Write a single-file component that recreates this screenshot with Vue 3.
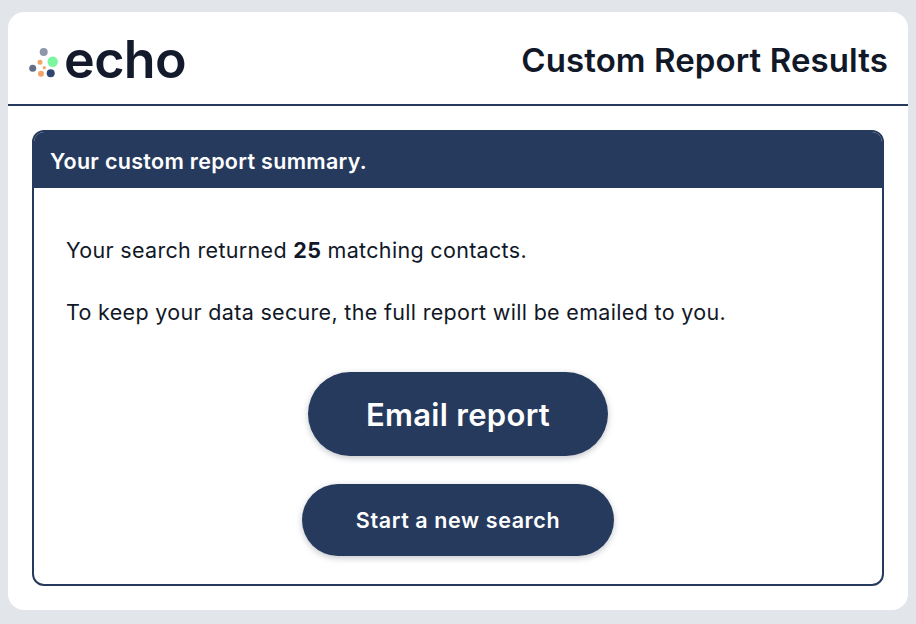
<template>
  <div class="page">
    <main class="card">
      <header class="top">
        <div class="logo">
          <svg class="mark" width="32" height="36" viewBox="0 0 32 36">
            <circle cx="14.7" cy="5" r="4" fill="#8e97a8" />
            <circle cx="11" cy="15.3" r="2.5" fill="#f2a468" />
            <circle cx="23.7" cy="14.7" r="5.2" fill="#7af79f" />
            <circle cx="15.3" cy="20.7" r="1.6" fill="#f2a468" />
            <circle cx="3.7" cy="21.3" r="3.5" fill="#666e87" />
            <circle cx="12" cy="26.7" r="3" fill="#f2a468" />
            <circle cx="21.7" cy="26.3" r="4" fill="#2f4673" />
          </svg>
          <span class="word">echo</span>
        </div>
        <h1>Custom Report Results</h1>
      </header>

      <section class="panel">
        <h2>Your custom report summary.</h2>
        <div class="body">
          <p>Your search returned <b>25</b> matching contacts.</p>
          <p>To keep your data secure, the full report will be emailed to you.</p>
          <div class="actions">
            <button class="btn big">Email report</button>
            <button class="btn small">Start a new search</button>
          </div>
        </div>
      </section>
    </main>
  </div>
</template>

<script setup>
</script>

<style>
  html, body {
    margin: 0;
    background: #e2e5ea;
  }
</style>

<style scoped>
  .page {
    box-sizing: border-box;
    width: 916px;
    height: 624px;
    padding: 12px 8px 14px;
    font-family: Inter, "Liberation Sans", sans-serif;
    color: #111827;
  }
  .card {
    height: 100%;
    background: #fff;
    border-radius: 16px;
    display: flex;
    flex-direction: column;
  }
  .top {
    height: 94px;
    box-sizing: border-box;
    border-bottom: 2px solid #263a5e;
    display: flex;
    justify-content: space-between;
    align-items: center;
    padding: 0 20px 0 21px;
  }
  .logo {
    display: flex;
    align-items: center;
    gap: 3px;
  }
  .mark {
    margin-top: 14px;
  }
  .word {
    margin-top: 4px;
    font-size: 52px;
    font-weight: 560;
    letter-spacing: -0.6px;
    line-height: 56px;
    color: #131a2b;
  }
  h1 {
    margin: 4px 0 0;
    font-size: 33px;
    font-weight: 600;
    letter-spacing: 0.1px;
    color: #111827;
  }
  .panel {
    margin: 24px 24px 0;
    height: 456px;
    box-sizing: border-box;
    border: 2px solid #263a5e;
    border-radius: 12px;
    overflow: hidden;
  }
  h2 {
    margin: 0;
    height: 56px;
    line-height: 58px;
    padding-left: 16px;
    background: #263a5e;
    color: #fff;
    font-size: 21.5px;
    font-weight: 600;
    letter-spacing: 0.3px;
  }
  .body {
    padding: 48px 32px 0;
    font-size: 21.5px;
    line-height: 28px;
    color: #111827;
    letter-spacing: 0.32px;
  }
  p {
    margin: 0 0 34px;
  }
  b {
    font-weight: 700;
  }
  .actions {
    margin-top: 46px;
    display: flex;
    flex-direction: column;
    align-items: center;
    gap: 28px;
  }
  .btn {
    border: 0;
    background: #263a5e;
    color: #fff;
    border-radius: 999px;
    font-family: inherit;
    box-shadow: 0 2px 6px rgba(17, 24, 39, 0.25);
  }
  .big {
    width: 300px;
    height: 84px;
    font-size: 31px;
    font-weight: 600;
    letter-spacing: 0.3px;
  }
  .small {
    width: 312px;
    height: 72px;
    font-size: 21.5px;
    font-weight: 600;
    letter-spacing: 0.6px;
  }
</style>
